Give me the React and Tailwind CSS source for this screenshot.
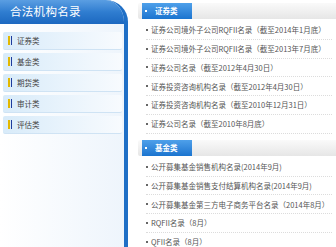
const menu = ['证券类', '基金类', '期货类', '审计类', '评估类'];

const sections = [
  {
    title: '证券类',
    items: [
      '证券公司境外子公司RQFII名录（截至2014年1月底）',
      '证券公司境外子公司RQFII名录（截至2013年7月底）',
      '证券公司名录（截至2012年4月30日）',
      '证券投资咨询机构名录（截至2012年4月30日）',
      '证券投资咨询机构名录（截至2010年12月31日）',
      '证券公司名录（截至2010年8月底）',
    ],
  },
  {
    title: '基金类',
    items: [
      '公开募集基金销售机构名录(2014年9月)',
      '公开募集基金销售支付结算机构名录(2014年9月)',
      '公开募集基金第三方电子商务平台名录（2014年8月）',
      'RQFII名录（8月）',
      'QFII名录（8月）',
    ],
  },
];

function Sidebar() {
  return (
    <div className="w-[128px] h-[247px] shrink-0 flex flex-col rounded-tr-[22px] border-r-[4px] border-[#1f6fc6] bg-gradient-to-r from-white to-[#eef5fc] overflow-hidden">
      <div className="h-[24px] pl-[10px] flex items-center bg-gradient-to-b from-[#5a9ee2] via-[#2f7dd0] to-[#1c68c0] text-white text-[11.5px] tracking-[0.3px]">
        合法机构名录
      </div>
      <div className="flex flex-col gap-[3px] pt-[8px] pl-[3px] pr-[2px]">
        {menu.map((m) => (
          <div key={m} className="h-[18px] flex items-center gap-[5px] pl-[5px] rounded-[2px] bg-gradient-to-r from-[#d8ebf9] via-[#e8f3fc] to-[#f8fbfe] border-b border-[#cfe3f4]">
            <span className="flex gap-[1px]">
              <span className="w-[1.5px] h-[9px] bg-[#e2b800]"></span>
              <span className="w-[1.5px] h-[9px] bg-[#1d3b9c]"></span>
            </span>
            <span className="text-[7.5px] text-[#444]">{m}</span>
          </div>
        ))}
      </div>
    </div>
  );
}

function Section({ title, items }) {
  return (
    <div className="flex flex-col">
      <div className="h-[16px] ml-[8px] flex items-stretch bg-gradient-to-b from-[#fafafa] to-[#e6e6e6] rounded-l-[2px]">
        <div className="ml-[4px] w-[50px] flex items-center gap-[8px] pl-[3px] bg-gradient-to-b from-[#4ea0ea] to-[#1a74cf]">
          <span className="w-[2px] h-[2px] bg-white"></span>
          <span className="text-[7.5px] font-bold text-white">{title}</span>
        </div>
      </div>
      <div className="flex flex-col pt-[2px] pl-[16px] pr-[4px]">
        {items.map((t) => (
          <div key={t} className="h-[18.8px] flex items-center gap-[3px] border-b border-dotted border-[#dcdcdc]">
            <span className="w-[2px] h-[2px] bg-[#666]"></span>
            <span className="text-[7.5px] text-[#555] whitespace-nowrap">{t}</span>
          </div>
        ))}
      </div>
    </div>
  );
}

export default function App() {
  return (
    <div className="w-[336px] h-[247px] flex bg-white overflow-hidden" style={{ fontFamily: '"Noto Sans CJK SC", "Liberation Sans", sans-serif' }}>
      <Sidebar />
      <div className="flex-1 flex flex-col gap-[6px] pt-[3px] pl-[2px]">
        {sections.map((s) => (
          <Section key={s.title} {...s} />
        ))}
      </div>
    </div>
  );
}
